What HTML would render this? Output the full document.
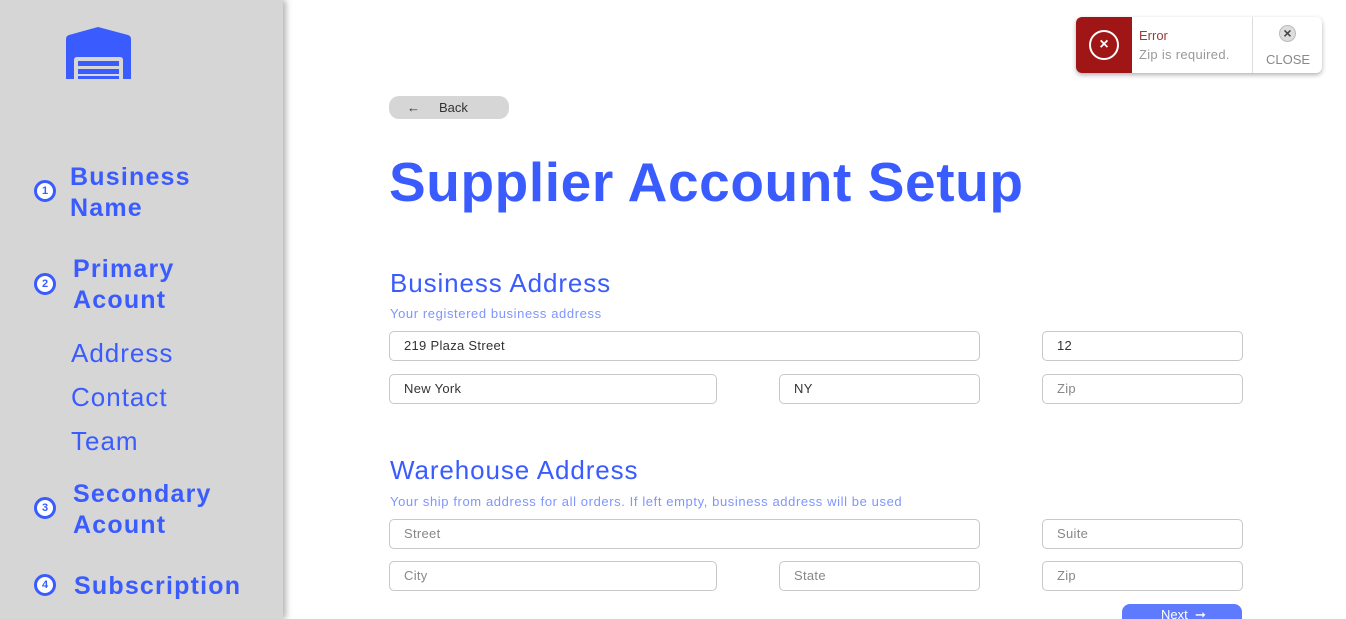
<!DOCTYPE html>
<html><head><style>
*{box-sizing:border-box;margin:0;padding:0}
html,body{width:1346px;height:619px;overflow:hidden}
body{background:#fff;font-family:"Liberation Sans",sans-serif;position:relative}
.side{position:absolute;left:0;top:0;width:283px;height:619px;background:#d6d6d6;box-shadow:3px 0 6px rgba(0,0,0,.3)}
.b{position:absolute;color:#3a5cff;font-weight:bold;font-size:25px;line-height:31px;letter-spacing:1.2px}
.c{position:absolute;width:22px;height:22px;border:3px solid #3a5cff;border-radius:50%;background:#fff;color:#3a5cff;font-size:11px;font-weight:bold;text-align:center;line-height:16px}
.s{position:absolute;left:71px;color:#3a5cff;font-size:26px;letter-spacing:1px}
.in{position:absolute;height:30px;border:1px solid #c8c8c8;border-radius:5px;font-size:13px;line-height:28px;padding-left:14px;color:#333;letter-spacing:0.3px}
.ph{color:#888}
.h2{position:absolute;left:390px;color:#3a5cff;font-size:26px;letter-spacing:0.9px}
.sub{position:absolute;left:390px;color:#7f95ff;font-size:13px;letter-spacing:0.6px}
</style></head><body>
<div class="side">
<svg style="position:absolute;left:66px;top:27px" width="65" height="52" viewBox="0 0 65 52"><path d="M0 12 Q0 9 3 8 L32 0 L62 8 Q65 9 65 12 L65 52 L57 52 L57 33 Q57 30 54 30 L11 30 Q8 30 8 33 L8 52 L0 52Z" fill="#3a5cff"/><rect x="12" y="34" width="41" height="5" fill="#3a5cff"/><rect x="12" y="42" width="41" height="5" fill="#3a5cff"/><rect x="12" y="49" width="41" height="3" fill="#3a5cff"/></svg>
<div class="c" style="left:34px;top:180px">1</div><div class="b" style="left:70px;top:162px">Business<br>Name</div>
<div class="c" style="left:34px;top:273px">2</div><div class="b" style="left:73px;top:254px">Primary<br>Acount</div>
<div class="s" style="top:338px">Address</div>
<div class="s" style="top:382px">Contact</div>
<div class="s" style="top:426px">Team</div>
<div class="c" style="left:34px;top:497px">3</div><div class="b" style="left:73px;top:479px">Secondary<br>Acount</div>
<div class="c" style="left:34px;top:574px">4</div><div class="b" style="left:74px;top:571px">Subscription</div>
</div>
<div style="position:absolute;left:389px;top:96px;width:120px;height:23px;background:#d6d6d6;border-radius:10px;font-size:13px;color:#333;line-height:23px"><span style="position:absolute;left:18px">&#8592;</span><span style="position:absolute;left:50px">Back</span></div>
<div style="position:absolute;left:389px;top:149px;color:#3a5cff;font-weight:bold;font-size:55px;line-height:66px;letter-spacing:0.6px">Supplier Account Setup</div>
<div class="h2" style="top:268px">Business Address</div>
<div class="sub" style="top:306px">Your registered business address</div>
<div class="in" style="left:389px;top:331px;width:591px">219 Plaza Street</div>
<div class="in" style="left:1042px;top:331px;width:201px">12</div>
<div class="in" style="left:389px;top:374px;width:328px">New York</div>
<div class="in" style="left:779px;top:374px;width:201px">NY</div>
<div class="in ph" style="left:1042px;top:374px;width:201px">Zip</div>
<div class="h2" style="top:455px">Warehouse Address</div>
<div class="sub" style="top:494px">Your ship from address for all orders. If left empty, business address will be used</div>
<div class="in ph" style="left:389px;top:519px;width:591px">Street</div>
<div class="in ph" style="left:1042px;top:519px;width:201px">Suite</div>
<div class="in ph" style="left:389px;top:561px;width:328px">City</div>
<div class="in ph" style="left:779px;top:561px;width:201px">State</div>
<div class="in ph" style="left:1042px;top:561px;width:201px">Zip</div>
<div style="position:absolute;left:1122px;top:604px;width:120px;height:30px;background:#5e7bff;border-radius:8px;color:#fff;font-size:13px;padding:3px 0 0 39px">Next &nbsp;&#10142;</div>
<div style="position:absolute;left:1076px;top:17px;width:246px;height:56px;background:#fff;border-radius:6px;box-shadow:0 2px 5px rgba(0,0,0,.3);overflow:hidden">
<div style="position:absolute;left:0;top:0;width:56px;height:56px;background:#a01515"></div>
<div style="position:absolute;left:13px;top:13px;width:30px;height:30px;border:2px solid #fff;border-radius:50%;color:#fff;font-weight:bold;text-align:center;line-height:26px;font-size:16px">&#215;</div>
<div style="position:absolute;left:63px;top:11px;font-size:13px;color:#9b3b3b">Error</div>
<div style="position:absolute;left:63px;top:30px;font-size:13px;color:#999;letter-spacing:0.3px">Zip is required.</div>
<div style="position:absolute;left:176px;top:0;width:1px;height:56px;background:#ddd"></div>
<div style="position:absolute;left:203px;top:8px;width:17px;height:17px;border-radius:50%;background:#ddd;border:1px solid #bbb;color:#444;font-size:14px;font-weight:bold;text-align:center;line-height:14px">&#215;</div>
<div style="position:absolute;left:190px;top:35px;font-size:13px;color:#888">CLOSE</div>
</div>
</body></html>
